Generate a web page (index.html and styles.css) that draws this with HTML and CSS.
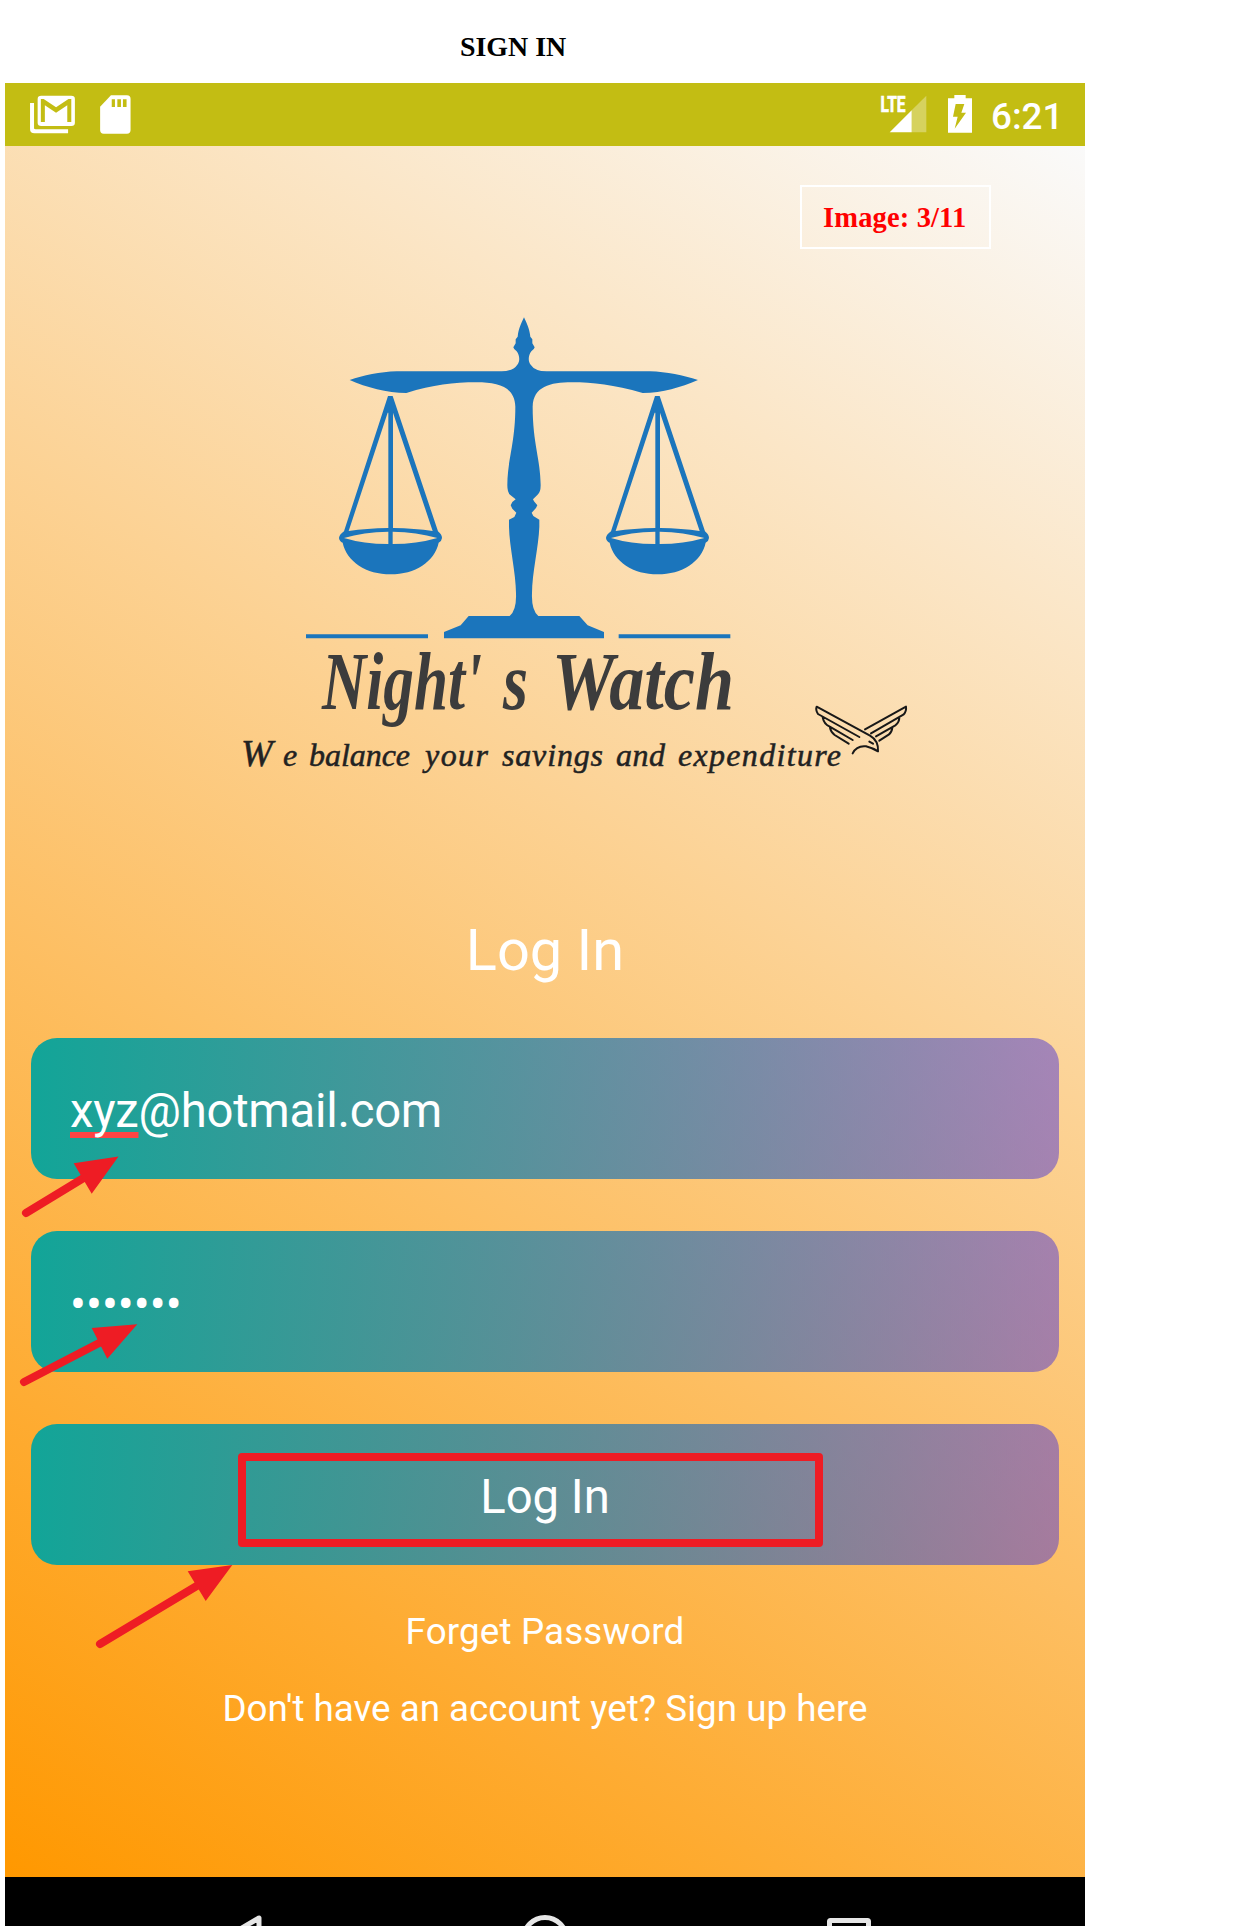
FILE: index.html
```
<!DOCTYPE html>
<html lang="en">
<head>
<meta charset="utf-8">
<title>Sign In</title>
<link rel="stylesheet" href="styles.css">
</head>
<body>
<h1 class="doc-title">SIGN IN</h1>
<main class="phone">
  <header class="status">
    <svg class="status-left" width="180" height="63" viewBox="5 83 180 63">
      <g transform="scale(.4005 .33333)">
        <path fill="#fff" d="M75 309h10v76q0 3 4 3h81v12H86q-11 0-11-13z"/>
        <rect x="94" y="287" width="93" height="91" rx="9" ry="10" fill="#fff"/>
        <path fill="#c3bd13" d="M102 366V297h7l31 25 31-25h7v69h-10v-50l-28 22-28-22v50z"/>
        <path fill="#fff" d="M277 286h40q9 0 9 11v93q0 11-9 11h-58q-9 0-9-11v-70z"/>
        <path fill="#c3bd13" d="M279 298h8v23h-8zM293 298h9v23h-9zM307 298h9v23h-9z"/>
      </g>
    </svg>
    <svg class="status-right" width="110" height="63" viewBox="874 83 110 63">
      <text class="lte" x="880.500" y="112" textLength="25" lengthAdjust="spacingAndGlyphs">LTE</text>
      <g transform="translate(780 60) scale(.33333)">
        <path fill="#fff" fill-opacity=".32" d="M439 107v110h-44v-66z"/>
        <path fill="#fff" d="M395 151v66h-66z"/>
        <path fill="#fff" d="M523 105h34v10h19v103h-72V115h19z"/>
        <path fill="#c3bd13" d="M527 132h26l-9 26h14l-34 48 9-36h-14z"/>
      </g>
    </svg>
    <span class="clock">6:21</span>
  </header>
  <section class="screen">
    <div class="counter">Image: 3/11</div>
    <svg class="logo" width="700" height="480" viewBox="230 310 700 480">
      <g class="scales" transform="translate(320 300) scale(.33333)">
        <path d="M612 52C620 70 628 84 631 110L637 118V130L644 142Q643 148 634 154C624 168 624 184 632 194Q644 213 680 214H990C1040 216 1090 226 1134 240C1080 262 1030 279 968 279C880 254 820 247 755 247C690 247 640 260 638 320C638 430 662 480 662 556Q662 578 652 585L639 598L642 604 652 616 648 624 635 638 640 648 658 659V680C656 740 636 820 636 880Q634 930 655 948H778L803 976 852 996V1015H372V996L422 976 446 948H569Q590 930 588 880C588 820 568 740 567 680V659L583 651 589 638 577 626 572 616 577 606 587 598 571 585Q562 578 562 556C562 480 586 430 586 320C584 260 534 247 470 247C400 247 340 254 259 279C200 279 140 262 89 240C130 226 180 216 230 214H545Q580 213 592 194C600 184 600 168 590 154Q581 148 580 142L587 130V118L593 110C596 84 604 70 612 52Z"/>
        <g id="pan">
          <path fill-rule="evenodd" d="M204 288H218L354 694Q366 704 366 714Q365 724 356 728C344 785 285 823 212 823C139 823 80 785 68 728Q58 724 57 714Q58 704 72 694ZM203 338L86 693Q140 685 205 684V338ZM219 338V684Q285 685 338 693L219 338ZM72 714Q130 732 205 732V695Q130 696 72 714ZM218 732Q290 732 352 714Q290 696 218 695Z"/>
        </g>
        <use href="#pan" x="801"/>
        <path d="M-42 1003H324V1015H-42ZM896 1003H1231V1015H896Z"/>
      </g>
      <g class="brand">
        <text x="322" y="709" textLength="160" lengthAdjust="spacingAndGlyphs">Night'</text>
        <text x="503" y="709" textLength="25" lengthAdjust="spacingAndGlyphs">s</text>
        <text x="552" y="709" textLength="182" lengthAdjust="spacingAndGlyphs">Watch</text>
      </g>
      <g class="tagline">
        <text y="766"><tspan class="lead" x="241">W</tspan><tspan x="283">e</tspan></text>
        <text x="309" y="766" textLength="101">balance</text>
        <text x="425" y="766" textLength="63">your</text>
        <text x="502" y="766" textLength="101">savings</text>
        <text x="616" y="766" textLength="49">and</text>
        <text x="678" y="766" textLength="163">expenditure</text>
      </g>
      <g class="bird" transform="translate(540 620) scale(.33333)">
        <path d="M958 351L834 282Q826 270 830 260L990 347Q1016 362 1014 394Q1000 385 978 379Q950 376 938 400M848 292Q852 312 868 319L938 360M870 323Q872 336 884 345L926 371M975 328L1098 260Q1100 275 1090 284L993 340M1078 292Q1078 308 1066 316L1008 349M1057 322Q1056 336 1046 344L1018 362M988 365L999 371"/>
      </g>
    </svg>
    <h2 class="heading">Log In</h2>
    <div class="field email"><span><span class="misspelt">xyz</span>@hotmail.com</span></div>
    <div class="field password"><span>•••••••</span></div>
    <div class="field button"><span>Log In</span></div>
    <p class="link forgot">Forget Password</p>
    <p class="link signup">Don't have an account yet? Sign up here</p>
  </section>
  <nav class="navbar">
    <svg width="1080" height="49" viewBox="5 1877 1080 49">
      <g fill="none" stroke="#e6e6e6" stroke-width="5" stroke-linejoin="round">
        <path d="M259 1918V1960L223 1939Z"/>
        <circle cx="545" cy="1939" r="21.5"/>
        <rect x="829.500" y="1920.500" width="39" height="39" rx="1"/>
      </g>
    </svg>
  </nav>
</main>
<svg class="marks" width="1256" height="1926" viewBox="0 0 1256 1926">
  <g stroke="#ee1c24" stroke-width="8" stroke-linecap="round">
    <path d="M26 1213L86 1176.500M24 1382L103 1341M100 1644L200 1584"/>
  </g>
  <path fill="#ee1c24" d="M118.500 1156.500L73.700 1163.300 91.700 1193.700ZM137.300 1324.300L91.700 1328 107.300 1358.700ZM232.300 1565L187.700 1571.300 205.700 1601Z"/>
  <rect x="242" y="1457" width="577" height="86" fill="none" stroke="#ee1c24" stroke-width="8" stroke-linejoin="round"/>
</svg>
</body>
</html>
```
FILE: styles.css
```
* { box-sizing: border-box; }
body {
  margin: 0;
  width: 1256px;
  height: 1926px;
  overflow: hidden;
  position: relative;
  background: #fff;
  font-family: Roboto, sans-serif;
}
.doc-title {
  margin: 0;
  height: 83px;
  padding: 31px 0 0 460px;
  font: bold 27.9px/31px "Liberation Serif", serif;
  color: #000;
}
.phone {
  width: 1080px;
  height: 1843px;
  margin-left: 5px;
  display: flex;
  flex-direction: column;
  color: #fff;
}
.status {
  height: 63px;
  display: flex;
  align-items: center;
  background: #c3bd13;
}
.status-right { margin-left: auto; }
.clock {
  width: 101px;
  padding: 3px 0 0 7px;
  font-size: 36.75px;
  font-weight: 500;
}
.lte { font: bold 22px Roboto, sans-serif; fill: #fff; stroke: #fff; stroke-width: .7px; }
.screen {
  height: 1731px;
  display: flex;
  flex-direction: column;
  padding: 39px 26px 0;
  background: linear-gradient(31.96deg, #ff9800, #fafafa);
}
.counter {
  width: 191px;
  height: 64px;
  margin-left: 769px;
  padding-left: 21px;
  border: 2px solid #fff;
  font: bold 28.5px/62px "Liberation Serif", serif;
  letter-spacing: .15px;
  color: #f00;
}
.logo { margin: 61px 0 0 199px; flex: none; }
.scales { fill: #1b75bc; }
.brand, .tagline { font-family: "Liberation Serif", serif; font-style: italic; font-weight: bold; }
.brand { font-size: 82px; fill: #3c3c3c; }
.tagline { font-size: 32px; font-weight: normal; fill: #222; stroke: #222; stroke-width: .5px; }
.lead { font-size: 38px; }
.bird path { fill: none; stroke: #181818; stroke-width: 6; stroke-linecap: round; stroke-linejoin: round; }
.heading {
  margin: 126px 0 0;
  height: 122px;
  font-size: 57.75px;
  font-weight: 400;
  line-height: 68px;
  text-align: center;
}
.field {
  height: 141px;
  flex: none;
  margin-bottom: 52px;
  padding: 5px 39px 0;
  display: flex;
  align-items: center;
  border-radius: 26px;
  background: linear-gradient(90deg, #12a598, rgba(79, 54, 212, .5));
  font-size: 47.25px;
  line-height: 56px;
}
.email { letter-spacing: -.25px; }
.password { padding-top: 7px; }
.misspelt {
  text-decoration: underline #ff4444 6px;
  text-underline-offset: 5px;
  text-decoration-skip-ink: none;
}
.button { justify-content: center; margin-bottom: 0; }
.link { margin: 0; text-align: center; font-size: 36.75px; line-height: 44px; }
.forgot { margin-top: 45px; letter-spacing: .15px; }
.signup { margin-top: 33px; }
.navbar { height: 49px; background: #000; }
.navbar svg { display: block; }
.marks { position: absolute; left: 0; top: 0; }
```
